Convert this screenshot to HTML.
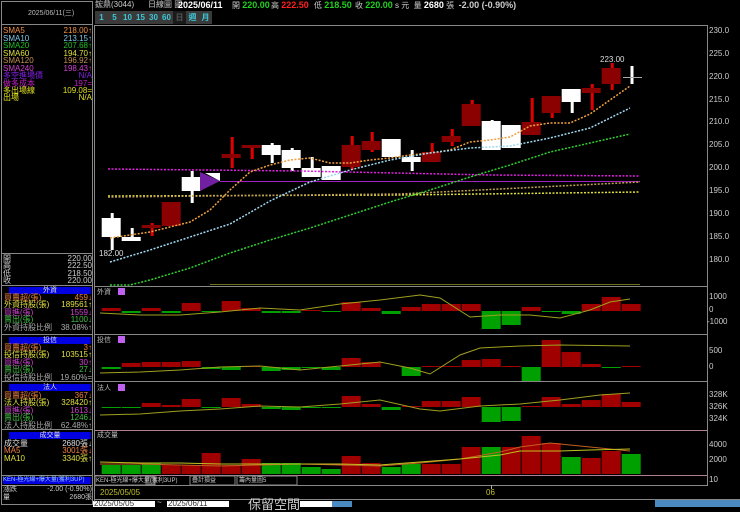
<!DOCTYPE html>
<html><head><meta charset="utf-8">
<style>
*{margin:0;padding:0;box-sizing:border-box}
body{width:740px;height:507px;background:#000;overflow:hidden;position:relative;font-family:"Liberation Sans","Noto Sans CJK TC",sans-serif;color:#fff}
.t{position:absolute;font-size:8px;line-height:8px;white-space:nowrap}
.r{text-align:right}
.hb{position:absolute;left:9px;width:82px;height:7px;background:#0000e0;color:#ddd;font-size:7px;line-height:7px;text-align:center}
.btn{position:absolute;top:11px;height:13px;width:13px;background:#3a3a3a;color:#3cc8d8;font-size:8px;line-height:13px;text-align:center;font-weight:bold}
</style></head><body>
<svg width="740" height="507" style="position:absolute;left:0;top:0">
<!-- frames -->
<rect x="1.5" y="1.5" width="91" height="503" fill="none" stroke="#888" stroke-width="1"/>
<line x1="1" y1="24.5" x2="93" y2="24.5" stroke="#888"/>
<line x1="2" y1="253.5" x2="92" y2="253.5" stroke="#888"/>
<line x1="2" y1="285.5" x2="92" y2="285.5" stroke="#888"/>
<line x1="2" y1="334.5" x2="92" y2="334.5" stroke="#888"/>
<line x1="2" y1="381.5" x2="92" y2="381.5" stroke="#888"/>
<line x1="2" y1="429.5" x2="92" y2="429.5" stroke="#888"/>
<line x1="2" y1="475.5" x2="92" y2="475.5" stroke="#888"/>
<line x1="2" y1="485.5" x2="92" y2="485.5" stroke="#888"/>
<line x1="94.5" y1="25" x2="94.5" y2="507" stroke="#888"/>
<line x1="94" y1="25.5" x2="707" y2="25.5" stroke="#888"/>
<line x1="707.5" y1="25" x2="707.5" y2="486" stroke="#888"/>
<line x1="95" y1="286.5" x2="707" y2="286.5" stroke="#888"/>
<line x1="95" y1="334.5" x2="707" y2="334.5" stroke="#888"/>
<line x1="95" y1="381.5" x2="707" y2="381.5" stroke="#888"/>
<line x1="95" y1="430.5" x2="707" y2="430.5" stroke="#b08090"/>
<line x1="95" y1="475.5" x2="707" y2="475.5" stroke="#b08090"/>
<line x1="95" y1="485.5" x2="707" y2="485.5" stroke="#888"/>
<line x1="95" y1="499.5" x2="740" y2="499.5" stroke="#888"/>
<line x1="491.5" y1="485" x2="491.5" y2="489" stroke="#aaa"/>
<g id="g"></g>
<!-- MAs -->
<polyline points="108,169 300,171 490,175 640,176" fill="none" stroke="#e020e0" stroke-width="1.5" stroke-dasharray="2,1.5"/>
<line x1="220" y1="181.5" x2="640" y2="181.5" stroke="#a020c0" stroke-width="1"/>
<polyline points="108,196 400,195 640,192" fill="none" stroke="#e0e040" stroke-width="1.5" stroke-dasharray="2,1.5"/>
<polyline points="108,197 400,194 640,182" fill="none" stroke="#c0a050" stroke-width="1.5" stroke-dasharray="2,1.5"/>
<polyline points="110,238 150,232 190,222 210,210 230,190 250,172 270,165 290,160 310,158 330,163 350,163 370,160 390,158 410,155 430,153 450,150 470,142 490,140 510,137 530,126 550,123 570,123 590,114 610,100 630,86" fill="none" stroke="#f0a040" stroke-width="1.5" stroke-dasharray="2,1.5"/>
<polyline points="110,262 150,250 190,237 230,224 270,201 310,182 350,170 390,160 430,153 470,148 510,146 550,138 590,128 630,108" fill="none" stroke="#a0d8f0" stroke-width="1.5" stroke-dasharray="2,1.5"/>
<polyline points="110,285 130,285 150,280 190,268 230,253 270,240 310,228 350,215 390,202 430,190 470,177 510,165 550,152 590,143 630,134" fill="none" stroke="#30d030" stroke-width="1.5" stroke-dasharray="2,1.5"/>
<line x1="210" y1="284.5" x2="640" y2="284.5" stroke="#707020" stroke-width="1"/>
<polygon points="200,172 220,181 200,191" fill="#7020a0"/>
<polygon points="205,173 220,173 220,181" fill="#fff"/>
<line x1="623" y1="77.5" x2="642" y2="77.5" stroke="#aaa"/>
<!-- sub lines -->
<polyline points="100,313 140,315 180,315 220,312 260,308 300,310 340,304 380,300 420,295 440,298 470,317 500,315 530,315 560,318 590,310 610,302 630,299" fill="none" stroke="#a0a020" stroke-width="1"/>
<polyline points="100,373 140,372 180,370 220,367 260,366 300,370 340,366 380,362 410,368 430,374 460,355 480,348 520,346 560,345 630,346" fill="none" stroke="#a0a020" stroke-width="1"/>
<polyline points="100,415 140,414 180,411 220,409 260,406 300,407 340,404 380,400 420,409 440,411 480,406 520,404 560,400 600,395 630,393" fill="none" stroke="#a0a020" stroke-width="1"/>
<polyline points="100,464 140,464 180,465 220,466 260,465 300,464 340,465 380,466 420,463 460,459 500,452 520,447 550,443 590,447 630,451" fill="none" stroke="#c06020" stroke-width="1"/>
<polyline points="100,462 140,463 180,463 220,464 260,464 300,464 340,464 380,465 420,462 460,459 500,455 520,451 560,451 590,450 630,449" fill="none" stroke="#c0c020" stroke-width="1"/>
<rect x="118" y="288" width="7" height="7" fill="#c060f0"/>
<rect x="118" y="336" width="7" height="7" fill="#c060f0"/>
<rect x="118" y="384" width="7" height="7" fill="#c060f0"/>
<rect x="95" y="476" width="60" height="9" fill="#000" stroke="#888"/>
<rect x="146" y="477" width="8" height="7" fill="#222" stroke="#666"/>
<rect x="190" y="476" width="45" height="9" fill="#000" stroke="#888"/>
<rect x="237" y="476" width="60" height="9" fill="#000" stroke="#888"/>
<rect x="93" y="501" width="62" height="8" fill="#fff"/>
<rect x="167" y="501" width="62" height="8" fill="#fff"/>
<rect x="300" y="501" width="32" height="8" fill="#fff"/>
<rect x="332" y="501" width="20" height="8" fill="#4a8ac0"/>
<rect x="655" y="500" width="85" height="7" fill="#4a8ac0"/>
</svg>
<script>
var g=document.getElementById('g'),s='';
function R(x,y,w,h,c){s+='<rect x="'+x+'" y="'+y+'" width="'+w+'" height="'+h+'" fill="'+c+'"/>';}
var C=[[1,213,250,218,237],[1,228,241,237,241],[0,223,236,225,228],[0,202,226,202,226],[1,171,203,177,191],null,[0,137,168,154,158],[0,145,159,145,148],[1,143,163,145,155],[1,148,171,150,168],[1,157,177,168,177],[1,166,180,166,180],[0,136,170,145,167],[0,132,152,141,150],[1,139,157,139,157],[1,150,171,157,162],[0,143,162,152,162],[0,129,146,136,142],[0,100,126,104,126],[1,120,150,121,150],[1,125,148,125,148],[0,98,135,122,135],[0,96,118,96,113],[1,89,113,89,102],[0,84,110,88,93],[0,63,90,68,84]];
C.forEach(function(c,i){if(!c)return;var x=101.7+20*i;var cx=x+9;
 R(cx,c[1],3,c[2]-c[1],c[0]?'#fff':'#e00000');R(x,c[3],19,Math.max(2,c[4]-c[3]),c[0]?'#fff':'#8b0000');});
R(630.5,66,3,18,'#fff');
function P(z,v){v.forEach(function(h,i){var x=101.7+20*i;if(h>0)R(x,z-h,19,h,'#a00000');else if(h<0)R(x,z,19,-h,'#00a000');});}
P(311,[3,-2,3,-2,8,-1,10,3,-2,-2,1,-1,9,3,-3,4,7,7,7,-18,-14,4,-1,-3,7,14,7]);
P(367,[-2,4,5,5,6,-2,-3,1,-4,-3,-1,-3,9,5,0,-9,1,1,7,8,1,-14,27,15,3,-1,1]);
P(407,[-1,-1,4,2,8,-1,9,3,-2,-3,-1,-1,11,3,-3,1,6,6,10,-15,-14,1,10,3,7,13,5]);
[9,9,11,9,9,21,9,15,11,11,7,5,18,11,7,10,10,10,27,27,27,38,31,17,16,23,20].forEach(function(h,i){var x=101.7+20*i;var gr=[0,1,2,8,9,10,11,14,15,19,23,26].indexOf(i)>=0;R(x,474-h,19,h,gr?'#00a000':'#a00000');});
g.innerHTML=s;
</script>
<!-- header -->
<div class="t" style="left:28px;top:10px;color:#bbb;font-size:7px">2025/06/11(三)</div>
<div class="t" style="left:95px;top:1px;color:#ccc">鋐鼎(3044)</div>
<div class="t" style="left:148px;top:1px;color:#ccc">日線圖 圖</div>
<div class="t" style="left:178px;top:1px;font-weight:bold;font-size:9px">2025/06/11</div>
<div class="t" style="left:232px;top:1px;color:#ccc">開 <b style="color:#20d020;font-size:9px">220.00</b></div>
<div class="t" style="left:271px;top:1px;color:#ccc">高 <b style="color:#ff2020;font-size:9px">222.50</b></div>
<div class="t" style="left:314px;top:1px;color:#ccc">低 <b style="color:#20d020;font-size:9px">218.50</b></div>
<div class="t" style="left:355px;top:1px;color:#ccc">收 <b style="color:#20d020;font-size:9px">220.00</b> s 元 &nbsp;量 <b style="color:#fff;font-size:9px">2680</b> 張 &nbsp;<b style="font-size:9px">-2.00 (-0.90%)</b></div>
<div class="btn" style="left:95px">1</div><div class="btn" style="left:108px">5</div><div class="btn" style="left:121px">10</div><div class="btn" style="left:134px">15</div><div class="btn" style="left:147px">30</div><div class="btn" style="left:160px">60</div><div class="btn" style="left:173px;background:#1a1a1a;color:#555">日</div><div class="btn" style="left:186px">週</div><div class="btn" style="left:199px">月</div>
<!-- left MA list -->
<div class="t" style="left:3px;top:27px;color:#f09040">SMA5</div><div class="t r" style="left:40px;width:52px;top:27px;color:#f09040">218.00↑</div>
<div class="t" style="left:3px;top:35px;color:#80c8e8">SMA10</div><div class="t r" style="left:40px;width:52px;top:35px;color:#80c8e8">213.15↑</div>
<div class="t" style="left:3px;top:42px;color:#20c020">SMA20</div><div class="t r" style="left:40px;width:52px;top:42px;color:#20c020">207.68↑</div>
<div class="t" style="left:3px;top:50px;color:#e0e040">SMA60</div><div class="t r" style="left:40px;width:52px;top:50px;color:#e0e040">194.70↑</div>
<div class="t" style="left:3px;top:57px;color:#c09050">SMA120</div><div class="t r" style="left:40px;width:52px;top:57px;color:#c09050">196.92↑</div>
<div class="t" style="left:3px;top:65px;color:#d040d0">SMA240</div><div class="t r" style="left:40px;width:52px;top:65px;color:#d040d0">198.43↑</div>
<div class="t" style="left:3px;top:72px;color:#8020e0">多空進場價</div><div class="t r" style="left:40px;width:52px;top:72px;color:#8020e0">N/A</div>
<div class="t" style="left:3px;top:80px;color:#c020c0">做多成本</div><div class="t r" style="left:40px;width:52px;top:80px;color:#c020c0">197=</div>
<div class="t" style="left:3px;top:87px;color:#e0e020">多出場線</div><div class="t r" style="left:40px;width:52px;top:87px;color:#e0e020">109.08=</div>
<div class="t" style="left:3px;top:94px;color:#e0e020">出場</div><div class="t r" style="left:40px;width:52px;top:94px;color:#e0e020">N/A</div>
<!-- OHLC -->
<div class="t" style="left:3px;top:255px;color:#ccc">開</div><div class="t r" style="left:40px;width:52px;top:255px;color:#ccc">220.00</div>
<div class="t" style="left:3px;top:262px;color:#ccc">高</div><div class="t r" style="left:40px;width:52px;top:262px;color:#ccc">222.50</div>
<div class="t" style="left:3px;top:270px;color:#ccc">低</div><div class="t r" style="left:40px;width:52px;top:270px;color:#ccc">218.50</div>
<div class="t" style="left:3px;top:277px;color:#ccc">收</div><div class="t r" style="left:40px;width:52px;top:277px;color:#ccc">220.00</div>
<!-- 外資 -->
<div class="hb" style="top:287px">外資</div>
<div class="t" style="left:4px;top:294px;color:#f08040">買賣超(張)</div><div class="t r" style="left:40px;width:52px;top:294px;color:#f08040">459↓</div>
<div class="t" style="left:4px;top:301px;color:#e0e040">外資持股(張)</div><div class="t r" style="left:40px;width:52px;top:301px;color:#e0e040">189561↑</div>
<div class="t" style="left:4px;top:309px;color:#d040d0">買進(張)</div><div class="t r" style="left:40px;width:52px;top:309px;color:#d040d0">1559↓</div>
<div class="t" style="left:4px;top:316px;color:#40c040">賣出(張)</div><div class="t r" style="left:40px;width:52px;top:316px;color:#40c040">1100↓</div>
<div class="t" style="left:4px;top:324px;color:#aaa">外資持股比例</div><div class="t r" style="left:40px;width:52px;top:324px;color:#aaa">38.08%↑</div>
<!-- 投信 -->
<div class="hb" style="top:337px">投信</div>
<div class="t" style="left:4px;top:344px;color:#f08040">買賣超(張)</div><div class="t r" style="left:40px;width:52px;top:344px;color:#f08040">3↑</div>
<div class="t" style="left:4px;top:351px;color:#e0e040">投信持股(張)</div><div class="t r" style="left:40px;width:52px;top:351px;color:#e0e040">103515↑</div>
<div class="t" style="left:4px;top:359px;color:#d040d0">買進(張)</div><div class="t r" style="left:40px;width:52px;top:359px;color:#d040d0">30↑</div>
<div class="t" style="left:4px;top:366px;color:#40c040">賣出(張)</div><div class="t r" style="left:40px;width:52px;top:366px;color:#40c040">27↓</div>
<div class="t" style="left:4px;top:374px;color:#aaa">投信持股比例</div><div class="t r" style="left:40px;width:52px;top:374px;color:#aaa">19.60%=</div>
<!-- 法人 -->
<div class="hb" style="top:384px">法人</div>
<div class="t" style="left:4px;top:392px;color:#f08040">買賣超(張)</div><div class="t r" style="left:40px;width:52px;top:392px;color:#f08040">367↓</div>
<div class="t" style="left:4px;top:399px;color:#e0e040">法人持股(張)</div><div class="t r" style="left:40px;width:52px;top:399px;color:#e0e040">328420↑</div>
<div class="t" style="left:4px;top:407px;color:#d040d0">買進(張)</div><div class="t r" style="left:40px;width:52px;top:407px;color:#d040d0">1613↓</div>
<div class="t" style="left:4px;top:414px;color:#40c040">賣出(張)</div><div class="t r" style="left:40px;width:52px;top:414px;color:#40c040">1246↓</div>
<div class="t" style="left:4px;top:422px;color:#aaa">法人持股比例</div><div class="t r" style="left:40px;width:52px;top:422px;color:#aaa">62.48%↑</div>
<!-- 成交量 -->
<div class="hb" style="top:432px">成交量</div>
<div class="t" style="left:4px;top:440px;color:#ddd">成交量</div><div class="t r" style="left:40px;width:52px;top:440px;color:#ddd">2680張↓</div>
<div class="t" style="left:4px;top:447px;color:#f08040">MA5</div><div class="t r" style="left:40px;width:52px;top:447px;color:#f08040">3001張↓</div>
<div class="t" style="left:4px;top:455px;color:#e0e040">MA10</div><div class="t r" style="left:40px;width:52px;top:455px;color:#e0e040">3340張↑</div>
<div class="hb" style="top:477px;left:3px;width:88px;font-size:6px;text-align:left;color:#9cf">KEN-極光線+爆大量(獲利3UP)</div>
<div class="t" style="left:3px;top:486px;color:#ccc;font-size:7px">漲跌</div><div class="t r" style="left:30px;width:62px;top:486px;color:#ccc;font-size:7px">-2.00 (-0.90%)</div>
<div class="t" style="left:3px;top:494px;color:#ccc;font-size:7px">量</div><div class="t r" style="left:30px;width:62px;top:494px;color:#ccc;font-size:7px">2680張</div>
<!-- chart labels -->
<div class="t" style="left:600px;top:56px;color:#ddd">223.00</div>
<div class="t" style="left:99px;top:250px;color:#ddd">182.00</div>
<div class="t" style="left:97px;top:289px;color:#bbb;font-size:7px">外資</div>
<div class="t" style="left:97px;top:337px;color:#bbb;font-size:7px">投信</div>
<div class="t" style="left:97px;top:385px;color:#bbb;font-size:7px">法人</div>
<div class="t" style="left:97px;top:432px;color:#bbb;font-size:7px">成交量</div>
<div class="t" style="left:96px;top:477px;color:#ccc;font-size:6px">KEN-極光線+爆大量(獲利3UP)</div>
<div class="t" style="left:192px;top:477px;color:#ccc;font-size:6px">疊計損益</div>
<div class="t" style="left:239px;top:477px;color:#ccc;font-size:6px">籌內量圖5</div>
<div class="t" style="left:100px;top:489px;color:#c0c030">2025/05/05</div>
<div class="t" style="left:486px;top:489px;color:#c0c030">06</div>
<div class="t" style="left:94px;top:500px;color:#333;font-size:8px">2025/05/05</div>
<div class="t" style="left:168px;top:500px;color:#333;font-size:8px">2025/06/11</div>
<div class="t" style="left:157px;top:499px;color:#ccc">~</div>
<div class="t" style="left:248px;top:498px;color:#ccc;font-size:13px;line-height:13px">保留空間</div>
<!-- axis -->
<div class="t" style="left:709px;top:27px;color:#ccc">230.0</div>
<div class="t" style="left:709px;top:50px;color:#ccc">225.0</div>
<div class="t" style="left:709px;top:73px;color:#ccc">220.0</div>
<div class="t" style="left:709px;top:96px;color:#ccc">215.0</div>
<div class="t" style="left:709px;top:118px;color:#ccc">210.0</div>
<div class="t" style="left:709px;top:141px;color:#ccc">205.0</div>
<div class="t" style="left:709px;top:164px;color:#ccc">200.0</div>
<div class="t" style="left:709px;top:187px;color:#ccc">195.0</div>
<div class="t" style="left:709px;top:210px;color:#ccc">190.0</div>
<div class="t" style="left:709px;top:233px;color:#ccc">185.0</div>
<div class="t" style="left:709px;top:256px;color:#ccc">180.0</div>
<div class="t" style="left:709px;top:293px;color:#ccc">1000</div>
<div class="t" style="left:709px;top:306px;color:#ccc">0</div>
<div class="t" style="left:707px;top:318px;color:#ccc">-1000</div>
<div class="t" style="left:709px;top:347px;color:#ccc">500</div>
<div class="t" style="left:709px;top:363px;color:#ccc">0</div>
<div class="t" style="left:709px;top:391px;color:#ccc">328K</div>
<div class="t" style="left:709px;top:403px;color:#ccc">326K</div>
<div class="t" style="left:709px;top:415px;color:#ccc">324K</div>
<div class="t" style="left:709px;top:441px;color:#ccc">4000</div>
<div class="t" style="left:709px;top:456px;color:#ccc">2000</div>
<div class="t" style="left:709px;top:476px;color:#ccc">10</div>
</body></html>
